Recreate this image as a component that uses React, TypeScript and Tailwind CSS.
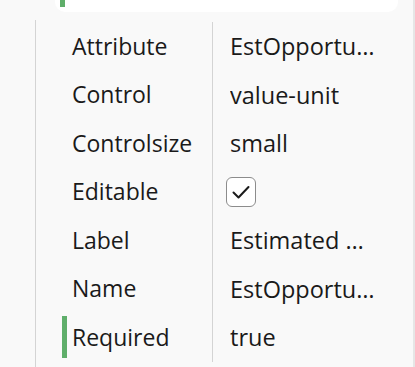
const rows: { label: string; value?: string; check?: boolean; active?: boolean }[] = [
  { label: "Attribute", value: "EstOpportunityValue" },
  { label: "Control", value: "value-unit" },
  { label: "Controlsize", value: "small" },
  { label: "Editable", check: true },
  { label: "Label", value: "Estimated Opportunity Value" },
  { label: "Name", value: "EstOpportunityValue" },
  { label: "Required", value: "true", active: true },
];

export default function App() {
  return (
    <div
      className="flex h-[367px] w-[415px] overflow-hidden bg-[#f9f9f9] text-[#1a1a1a]"
      style={{ fontFamily: '"Open Sans", "Noto Sans", sans-serif' }}
    >
      <div className="flex-1">
        <div className="relative ml-[55px] h-[12px] w-[343px] rounded-b-[10px] bg-white">
          <div className="absolute left-[5px] top-0 h-[7px] w-[5px] bg-[#5fae6a]" />
        </div>
        <div className="ml-[35px] mt-[8px] h-[347px] border-l border-[#d4d4d4] pt-[2px]">
          {rows.map((r) => (
            <div key={r.label} className="flex h-[48.5px]">
              <div className="flex w-[177px] items-center border-r border-[#d4d4d4] pl-[26px]">
                <div className={`mr-[5px] h-[42px] w-[5px] shrink-0 ${r.active ? "bg-[#5fae6a]" : ""}`} />
                <span className="text-[23px] leading-none">{r.label}</span>
              </div>
              <div className="flex items-center pl-[17px]">
                {r.check ? (
                  <div className="ml-[-4px] flex h-[30px] w-[30px] items-center justify-center rounded-[6px] border border-[#8c8c8c] bg-white">
                    <svg width="22" height="22" viewBox="0 0 22 22" fill="none">
                      <path d="M3.5 11.5 L8.5 16.5 L18.5 6" stroke="#1a1a1a" strokeWidth="2" strokeLinecap="round" strokeLinejoin="round" />
                    </svg>
                  </div>
                ) : (
                  <span className="block max-w-[148px] truncate text-[23.5px] leading-[30px]">{r.value}</span>
                )}
              </div>
            </div>
          ))}
        </div>
      </div>
      <div className="w-[2px] bg-[#e6e6e6]" />
    </div>
  );
}
